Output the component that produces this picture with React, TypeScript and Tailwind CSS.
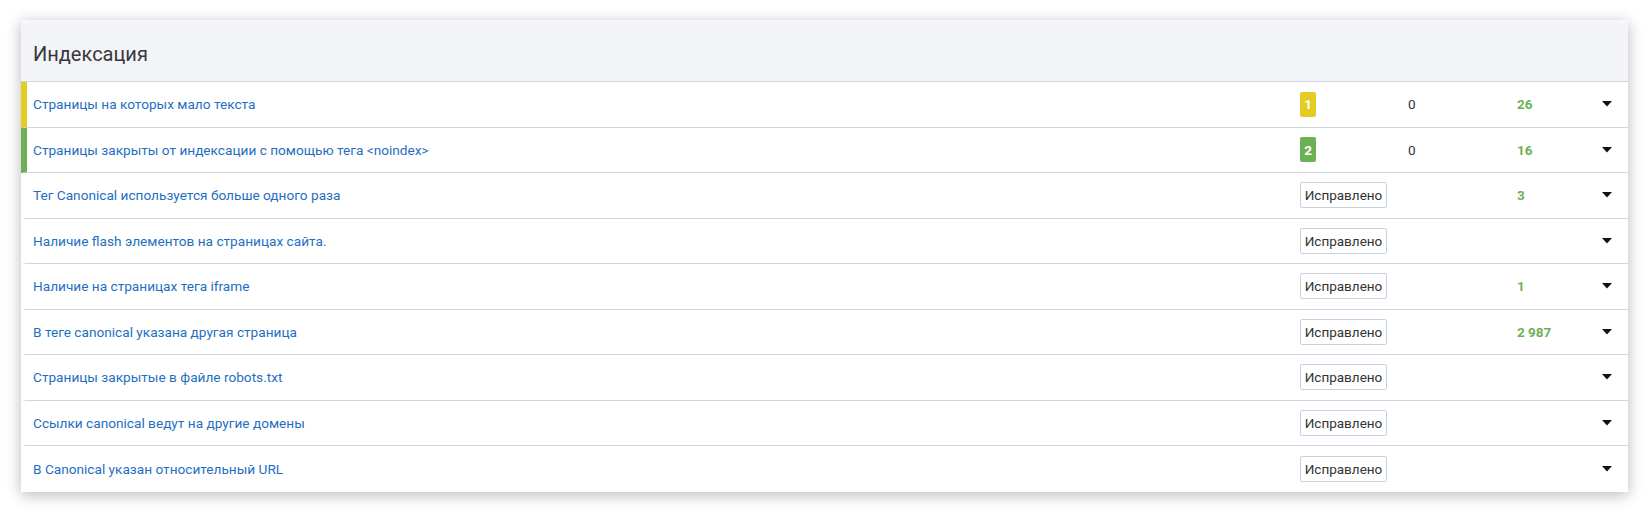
import React from "react";

type Row = {
  title: string;
  bar?: string;
  badge?: { n: string; color: string };
  zero?: string;
  fixed?: boolean;
  count?: string;
};

const rows: Row[] = [
  { title: "Страницы на которых мало текста", bar: "border-l-[#e5cc25]", badge: { n: "1", color: "bg-[#e5cc25]" }, zero: "0", count: "26" },
  { title: "Страницы закрыты от индексации с помощью тега <noindex>", bar: "border-l-[#6db155]", badge: { n: "2", color: "bg-[#6db155]" }, zero: "0", count: "16" },
  { title: "Тег Canonical используется больше одного раза", fixed: true, count: "3" },
  { title: "Наличие flash элементов на страницах сайта.", fixed: true },
  { title: "Наличие на страницах тега iframe", fixed: true, count: "1" },
  { title: "В теге canonical указана другая страница", fixed: true, count: "2 987" },
  { title: "Страницы закрытые в файле robots.txt", fixed: true },
  { title: "Ссылки canonical ведут на другие домены", fixed: true },
  { title: "В Canonical указан относительный URL", fixed: true },
];

function Caret() {
  return (
    <svg width="10" height="6" viewBox="0 0 10 6" className="block">
      <path d="M0 0 H10 L5 5.5 Z" fill="#111" />
    </svg>
  );
}

export default function App() {
  return (
    <div className="w-[1650px] h-[513px] bg-white pt-[20px] pl-[21px] pr-[22px] font-['Roboto','Liberation_Sans',sans-serif]">
      <div className="bg-white shadow-[0_3px_14px_rgba(0,0,0,0.28)]">
        <div className="h-[62px] bg-[#f3f4f8] border-t-[3px] border-t-[#f7f8fb] border-b border-b-[#cdd5e3] flex items-center pl-[12px] pt-[4px]">
          <h2 className="text-[20px] text-[#37383d] leading-none">Индексация</h2>
        </div>
        {rows.map((r, i) => (
          <div
            key={i}
            className={`flex items-center h-[45.5px] border-l-[6px] ${r.bar ?? "border-l-transparent"} ${
              i < rows.length - 1 ? "border-b border-b-[#cdd5e3]" : ""
            }`}
          >
            <div className="flex-1 pl-[6px] text-[13.65px] text-[#1f6fc1]">{r.title}</div>
            <div className="w-[108px] flex items-center">
              {r.badge && (
                <span className={`${r.badge.color} text-white text-[13.5px] font-bold w-[16px] h-[25px] rounded-[2px] flex items-center justify-center`}>
                  {r.badge.n}
                </span>
              )}
              {r.fixed && (
                <span className="h-[26px] w-[87px] border border-[#c9d1df] rounded-[2px] flex items-center justify-center text-[13.5px] text-[#333]">
                  Исправлено
                </span>
              )}
            </div>
            <div className="w-[109px] text-[13.5px] text-[#333]">{r.zero ?? ""}</div>
            <div className="w-[85px] text-[13.5px] font-bold text-[#6db155]">{r.count ?? ""}</div>
            <div className="w-[26px] pr-[16px] flex justify-start">
              <Caret />
            </div>
          </div>
        ))}
      </div>
    </div>
  );
}
